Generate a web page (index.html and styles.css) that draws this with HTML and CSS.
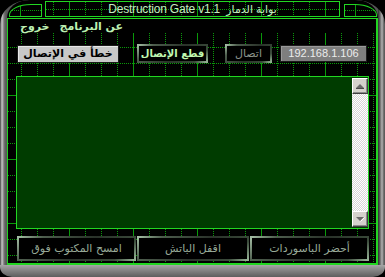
FILE: index.html
```html
<!DOCTYPE html>
<html lang="ar">
<head>
<meta charset="utf-8">
<title>Destruction Gate v1.1</title>
<link rel="stylesheet" href="styles.css">
</head>
<body>
<div class="window">
  <div class="frame">
    <header class="titlebar">
      <div class="cap cap-left"></div>
      <div class="title">Destruction Gate v1.1 <span dir="rtl">بوابة الدمار</span></div>
      <div class="cap cap-right"></div>
    </header>
    <main class="panel">
      <nav class="menu" dir="rtl"><span>عن البرنامج</span><span>خروج</span></nav>
      <div class="toolbar">
        <div class="status" dir="rtl">خطأ في الإتصال</div>
        <button class="btn btn-disconnect" dir="rtl">قطع الإتصال</button>
        <button class="btn btn-connect" dir="rtl">اتصال</button>
        <div class="ip">192.168.1.106</div>
      </div>
      <div class="log">
        <div class="log-text"></div>
        <div class="scrollbar">
          <div class="sb-btn"><svg width="14" height="14" viewBox="0 0 14 14"><polygon points="3,9 7,5 11,9" fill="#6a6a6a"/><line x1="3" y1="9.5" x2="11" y2="9.5" stroke="#4a4a4a"/></svg></div>
          <div class="sb-track"></div>
          <div class="sb-btn"><svg width="14" height="14" viewBox="0 0 14 14"><polygon points="3,5 11,5 7,9" fill="#6a6a6a"/><line x1="7.5" y1="9.5" x2="11.5" y2="5.5" stroke="#ffffff"/></svg></div>
        </div>
      </div>
      <div class="actions">
        <button class="btn action a1" dir="rtl">امسح المكتوب فوق</button>
        <button class="btn action a2" dir="rtl">اقفل الباتش</button>
        <button class="btn action a3" dir="rtl">أحضر الباسوردات</button>
      </div>
    </main>
  </div>
</div>
</body>
</html>
```

FILE: styles.css
```css
* { box-sizing: border-box; }
html, body { margin: 0; padding: 0; background: #000; }
body { width: 385px; height: 277px; overflow: hidden; font-family: "DejaVu Sans", sans-serif; }

.window {
  width: 385px;
  height: 277px;
  padding: 0 7px;
  border-radius: 30px 30px 12px 12px / 24px 24px 10px 10px;
  overflow: hidden;
  background:
    linear-gradient(180deg, #a6a6a6 0, #929292 3px, #7a7a7a 7px, #5e5e5e 12px) left bottom / 100% 12px no-repeat,
    linear-gradient(90deg, #3a3a3a 0, #888 1px, #c6c6c6 2px, #a4a4a4 3px, #767676 4px, #565656 6px,
      #565656 calc(100% - 7px), #2c2c2c calc(100% - 7px), #646464 calc(100% - 5px), #b2b2b2 calc(100% - 3px), #5c5c5c calc(100% - 1px));
}

.frame {
  height: 265px;
  background: #000;
  border-radius: 22px 22px 0 0 / 18px 18px 0 0;
  display: flex;
  flex-direction: column;
}

/* ---------- title bar ---------- */
.titlebar {
  height: 18px;
  display: flex;
  align-items: flex-start;
  padding-left: 2px;
  flex: none;
}
.cap {
  width: 33px;
  height: 13px;
  margin-top: 4px;
  border: 1px solid #22d622;
  background:
    linear-gradient(90deg, #0a9a0a 1px, transparent 1px) 10px 0 / 64px 100% repeat-y,
    conic-gradient(from 270deg at 1px 1px, #0a9a0a 25%, transparent 0) 0 5px / 2px 16px repeat-x,
    #000;
}
.cap-left { border-top-left-radius: 22px 11px; }
.cap-right { border-top-right-radius: 22px 11px; margin-left: 4px; }
.title {
  width: 295px;
  height: 16px;
  margin: 1px 0 0 3px;
  border: 1px solid #22d622;
  background:
    linear-gradient(90deg, #0a9a0a 1px, transparent 1px) 23px 0 / 64px 100%,
    conic-gradient(from 270deg at 1px 1px, #0a9a0a 25%, transparent 0) 7px 0 / 16px 2px,
    conic-gradient(from 270deg at 1px 1px, #0a9a0a 25%, transparent 0) 0 7px / 2px 16px repeat-x,
    #000;
  color: #c4eec0;
  font: 12px/14px "Liberation Sans", "DejaVu Sans", sans-serif;
  letter-spacing: -0.2px;
  text-align: center;
  white-space: nowrap;
}
.title span { display: inline-block; margin-left: 3px; letter-spacing: 0; font-size: 11px; }

/* ---------- main panel ---------- */
.panel {
  height: 247px;
  border: solid #22d622;
  border-width: 1px 2px 2px 1px;
  display: flex;
  flex-direction: column;
  background:
    linear-gradient(90deg, #0a9a0a 1px, transparent 1px) 61px 0 / 64px 100%,
    linear-gradient(180deg, #0a9a0a 1px, transparent 1px) 0 12px / 100% 64px,
    conic-gradient(from 270deg at 1px 1px, #0a9a0a 25%, transparent 0) 13px 0 / 16px 2px,
    conic-gradient(from 270deg at 1px 1px, #0a9a0a 25%, transparent 0) 0 12px / 2px 16px,
    #000;
}

.menu {
  height: 14px;
  background: #000;
  display: flex;
  justify-content: flex-end;
  gap: 10px;
  padding-left: 12px;
  padding-top: 1px;
  color: #bdf0b2;
  font-size: 11px;
  font-weight: bold;
  line-height: 14px;
  flex: none;
}

.toolbar {
  height: 19px;
  margin-top: 11px;
  display: flex;
  align-items: center;
  padding-left: 9px;
  flex: none;
}
.status {
  width: 102px;
  height: 18px;
  background: #c8c8c8;
  border: 1px solid #1a1a1a;
  box-shadow: inset 1px 1px 0 #e8e8e8;
  color: #000;
  font-size: 11px;
  font-weight: bold;
  line-height: 16px;
  text-align: center;
  white-space: nowrap;
}

.btn {
  appearance: none;
  margin: 0;
  padding: 0;
  background: #000;
  border: 2px solid;
  border-image: linear-gradient(135deg, #a6c0a6 0, #4e5e4e 18%, #2a322a 55%, #3a4a3a 85%, #9ab89a 100%) 1;
  font-family: "DejaVu Sans", sans-serif;
  font-size: 11px;
  text-align: center;
  white-space: nowrap;
  cursor: default;
}
.btn-disconnect {
  width: 71px;
  height: 19px;
  margin-left: 18px;
  color: #c0f8b0;
  font-size: 10px;
  font-weight: bold;
  line-height: 15px;
}
.btn-connect {
  width: 47px;
  height: 19px;
  margin-left: 17px;
  color: #8a928a;
  line-height: 15px;
}
.ip {
  width: 87px;
  height: 17px;
  margin-left: 8px;
  background: #7e7e7e;
  border: 1px solid #1c1c1c;
  box-shadow: inset 1px 1px 0 #9a9a9a;
  color: #ececec;
  font: 11px/15px "Liberation Sans", sans-serif;
  text-align: center;
}

/* ---------- log area ---------- */
.log {
  width: 353px;
  height: 153px;
  margin: 13px 0 0 8px;
  border: 1px solid #22d622;
  background: #003c00;
  display: flex;
  flex: none;
}
.log-text { flex: 1; }
.scrollbar {
  width: 16px;
  padding: 1px 0;
  display: flex;
  flex-direction: column;
}
.sb-btn {
  width: 16px;
  height: 16px;
  background: #d4d2cc;
  border: 1px solid;
  border-color: #fff #404040 #404040 #fff;
  box-shadow: inset -1px -1px 0 #8a8a8a;
  flex: none;
}
.sb-btn svg { display: block; }
.sb-track {
  flex: 1;
  background: repeating-conic-gradient(#d6d6d6 0 25%, #ffffff 0 50%) 0 0 / 2px 2px;
}

/* ---------- bottom actions ---------- */
.actions {
  height: 25px;
  margin-top: 7px;
  padding-left: 9px;
  display: flex;
  flex: none;
}
.action {
  height: 25px;
  color: #98aa98;
  font-size: 11px;
  line-height: 21px;
}
.a1 { width: 119px; }
.a2 { width: 112px; margin-left: 1px; }
.a3 { width: 119px; margin-left: 1px; }
```
